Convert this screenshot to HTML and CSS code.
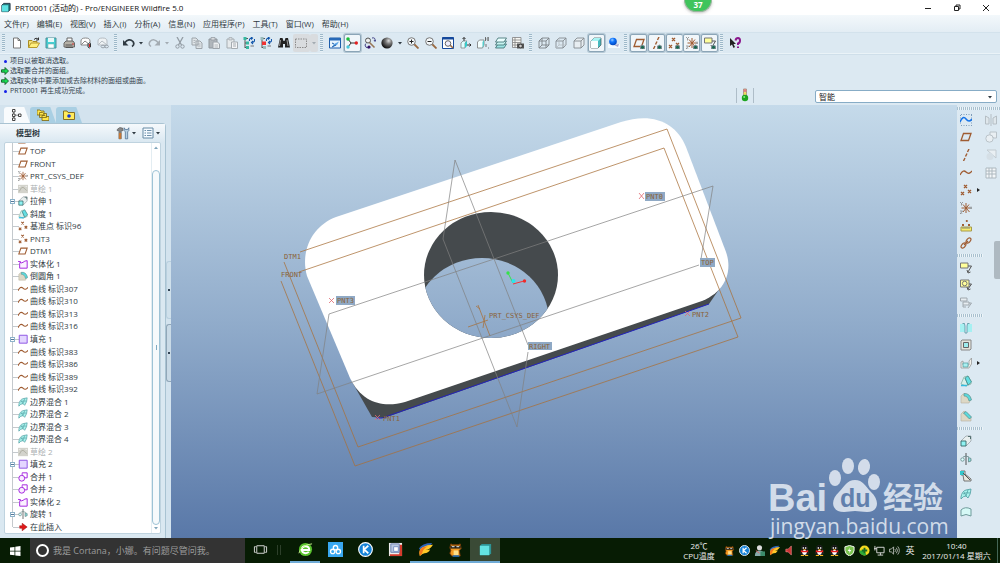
FILE: index.html
```html
<!DOCTYPE html>
<html lang="zh-CN">
<head>
<meta charset="utf-8">
<title>PRT0001 (活动的) - Pro/ENGINEER Wildfire 5.0</title>
<link rel="stylesheet" href="styles.css">
</head>
<body>
<svg class="defs" aria-hidden="true">
  <defs>
    <radialGradient id="ball" cx=".65" cy=".3" r=".7"><stop offset="0" stop-color="#ddd"/><stop offset=".4" stop-color="#777"/><stop offset="1" stop-color="#111"/></radialGradient>
    <radialGradient id="blueball" cx=".4" cy=".3" r=".7"><stop offset="0" stop-color="#9cf"/><stop offset=".4" stop-color="#17f"/><stop offset="1" stop-color="#04b"/></radialGradient>
  </defs>
  <symbol id="cube" viewBox="0 0 12 12"><path d="M2 3.5 4 1.500H11V8.500L9 10.500H2Z" fill="#24797c" stroke="#234" /><path d="M2 3.500H9V10.500H2Z" fill="#5fe3e3"/></symbol>
  <symbol id="new" viewBox="0 0 12 12"><path d="M2.500 1H7L9.500 3.500V11H2.500Z" fill="#fff" stroke="#777"/><path d="M7 1V3.500H9.500" fill="none" stroke="#777"/></symbol>
  <symbol id="open" viewBox="0 0 12 12"><path d="M.5 10.500V3.500H4L5 4.500H9V6" fill="#f3e27a" stroke="#a98b22"/><path d="M.5 10.500 3 6H11.500L9 10.500Z" fill="#ffef7d" stroke="#b79a2c"/><path d="M6 2.500Q8 0 10 2M10.500 .5V3H8" fill="none" stroke="#333"/></symbol>
  <symbol id="save" viewBox="0 0 12 12"><path d="M1 1H11V11H1Z" fill="#46cfd2" stroke="#4c8f98"/><path d="M3 1H9V5H3Z" fill="#e8f8f8"/><path d="M3 7H9V11H3Z" fill="#fff" stroke="#6aa" stroke-width=".5"/></symbol>
  <symbol id="print" viewBox="0 0 12 12"><path d="M4 5V1H9V5" fill="#fff" stroke="#666"/><path d="M1 6 3 4H10L11.500 6V10H1Z" fill="#b5b0a6" stroke="#666"/><path d="M2.500 8H9.500M2.500 10.500H10" stroke="#555"/><circle cx="10" cy="7" r=".8" fill="#d22"/></symbol>
  <symbol id="mail" viewBox="0 0 12 12"><path d="M1 8V4Q1 1 5.500 1T10 4V8Z" fill="#fff" stroke="#888"/><path d="M1 8 5 4 10 8" fill="none" stroke="#888"/><path d="M8 6.500V10Q9.500 12 10.500 10V6.500Q9.500 5 8.500 6.500" fill="none" stroke="#333"/><path d="M9.500 7V10" stroke="#d22"/></symbol>
  <symbol id="maillink" viewBox="0 0 12 12"><path d="M1 8V4Q1 1 5.500 1T10 4V8Z" fill="#eef2f4" stroke="#b5bcc2"/><path d="M1 8 5 4 10 8" fill="none" stroke="#b5bcc2"/><ellipse cx="6" cy="9.500" rx="2" ry="1.300" fill="none" stroke="#9aa3ab"/><ellipse cx="9.500" cy="9.500" rx="2" ry="1.300" fill="none" stroke="#9aa3ab"/></symbol>
  <symbol id="undo" viewBox="0 0 12 12"><path d="M1.500 6Q6 .5 10 4.500Q12 7.500 9 9.500" fill="none" stroke="currentColor" stroke-width="1.700"/><path d="M0 3V8.500H5.500Z" fill="currentColor"/></symbol>
  <symbol id="redo" viewBox="0 0 12 12"><path d="M10.500 6Q6 .5 2 4.500Q0 7.500 3 9.500" fill="none" stroke="currentColor" stroke-width="1.500"/><path d="M12 3V8.500H6.500Z" fill="currentColor"/></symbol>
  <symbol id="dd" viewBox="0 0 6 6"><path d="M1 2H5L3 4.500Z" fill="currentColor"/></symbol>
  <symbol id="cut" viewBox="0 0 12 12"><path d="M3 0 7.500 8M9 0 4.500 8" stroke="#939ca4" stroke-width="1.300"/><circle cx="3.500" cy="9.500" r="1.700" fill="none" stroke="#939ca4"/><circle cx="8.500" cy="9.500" r="1.700" fill="none" stroke="#939ca4"/></symbol>
  <symbol id="copy" viewBox="0 0 12 12"><path d="M1 1H5L7 3V8H1ZM5 4H9L11 6V11.500H5Z" fill="#dfe5e8" stroke="#9da4aa"/><path d="M6.500 7H9.500M6.500 9H9.500M2.500 3.500H4.500M2.500 5.500H4" stroke="#9da4aa" stroke-width=".7"/></symbol>
  <symbol id="paste" viewBox="0 0 12 12"><path d="M1 2H9V11H1Z" fill="#b0b6bb" stroke="#8f979d"/><path d="M3 .5H7V3H3Z" fill="#d7dbdd" stroke="#8f979d" stroke-width=".7"/><path d="M5 5H9.500L11.500 7V11.500H5Z" fill="#eceff0" stroke="#9da4aa"/><path d="M6.500 8H10M6.500 10H10" stroke="#9da4aa" stroke-width=".7"/></symbol>
  <symbol id="pastes" viewBox="0 0 12 12"><path d="M1 2H8V11H1Z" fill="#e6eaec" stroke="#a5acb1"/><path d="M3 .5H6V3H3Z" fill="#d7dbdd" stroke="#a5acb1" stroke-width=".7"/><path d="M5.500 5H11.500V11.500H5.500Z" fill="#f4f5f6" stroke="#a5acb1"/><path d="M7 7H10M7 9H10" stroke="#a5acb1"/></symbol>
  <symbol id="regen" viewBox="0 0 12 12"><path d="M2 1V11M2 1.500H5M2 6H5M2 10.500H5" stroke="#555"/><path d="M.5 0H3.500V3H.5ZM3 4.500H6V7.500H3ZM3 9H6V12H3Z" fill="#36b7a0"/><path d="M6.500 4Q6 1 9 1M8 0 9.500 1 8 2.500M11.500 2V4Q11 5.500 9 5.500M10 4 8.500 5.500 10 7" fill="none" stroke="#15a" stroke-width="1.100"/><path d="M7.500 9H11" stroke="#777"/></symbol>
  <symbol id="regenr" viewBox="0 0 12 12"><path d="M2 1V11M2 1.500H5M2 6H5M2 10.500H5" stroke="#555"/><path d="M.5 0H3.500V3H.5ZM3 9H6V12H3Z" fill="#9bb"/><path d="M2 4.500H6V8H2Z" fill="#e33"/><path d="M6.500 4Q6 1 9 1M8 0 9.500 1 8 2.500M11.500 2V4Q11 5.500 9 5.500M10 4 8.500 5.500 10 7" fill="none" stroke="#15a" stroke-width="1.100"/><path d="M7.500 9H11" stroke="#777"/></symbol>
  <symbol id="find" viewBox="0 0 12 12"><path d="M2 1H4.500L5.500 4H6.500L7.500 1H10L12 10.500H7V7H5V10.500H0Z" fill="#222"/><path d="M2.500 3 1.500 9M9 3 10 9" stroke="#bbb" stroke-width=".8"/></symbol>
  <symbol id="selbox" viewBox="0 0 12 12"><path d="M.5 2H11.500V10.500H.5Z" fill="none" stroke="#8b8b8b" stroke-dasharray="1.500 1"/></symbol>
  <symbol id="repaint" viewBox="0 0 12 12"><path d="M.5 1H11.500V11H.5Z" fill="#e8f4fd" stroke="#1d5dab"/><path d="M.5 1H11.500V3.500H.5Z" fill="#2769b8"/><path d="M3 10 5 7 10 4.500 8 8Z" fill="#5ca5e6"/><path d="M3 6 5 7M3 10 7 8" stroke="#1d5dab"/></symbol>
  <symbol id="spin" viewBox="0 0 12 12"><path d="M2 2 5 6H11M5 6 2 10" fill="none" stroke="#333"/><circle cx="2" cy="2" r="1.800" fill="#19bf3a"/><circle cx="10.300" cy="6" r="1.700" fill="#e32020"/><circle cx="2" cy="10" r="1.700" fill="#46c9dc"/></symbol>
  <symbol id="orient" viewBox="0 0 12 12"><circle cx="4" cy="3.500" r="2.500" fill="#eee" stroke="#555"/><path d="M5.500 5.500 10.500 10.500" stroke="#975" stroke-width="1.600"/><path d="M8 1Q11.500 0 11 4M10 3 11 4.500 12 3M1 8Q1 11 5 11M2 6.500 1 8" fill="none" stroke="#448"/><circle cx="5" cy="10" r="1.600" fill="#316"/></symbol>
  <symbol id="sphere" viewBox="0 0 12 12"><circle cx="6" cy="6" r="5.600" fill="url(#ball)"/></symbol>
  <symbol id="zin" viewBox="0 0 12 12"><path d="M7 7 11.500 11.500" stroke="#9a6a42" stroke-width="1.800"/><circle cx="4.500" cy="4.500" r="3.800" fill="#f4f8fa" stroke="#777"/><path d="M2.500 4.500H6.500M4.500 2.500V6.500" stroke="#222"/></symbol>
  <symbol id="zout" viewBox="0 0 12 12"><path d="M7 7 11.500 11.500" stroke="#9a6a42" stroke-width="1.800"/><circle cx="4.500" cy="4.500" r="3.800" fill="#f4f8fa" stroke="#777"/><path d="M2.500 4.500H6.500" stroke="#222"/></symbol>
  <symbol id="refit" viewBox="0 0 12 12"><path d="M.5 .5H11.500V11.500H.5Z" fill="#fff" stroke="#15499c"/><path d="M.5 1.500H11.500" stroke="#15499c" stroke-width="2"/><path d="M8 8 11 11" stroke="#9a6a42" stroke-width="1.600"/><circle cx="6" cy="6.500" r="2.800" fill="#eef" stroke="#666"/></symbol>
  <symbol id="reor" viewBox="0 0 12 12"><path d="M4 .5V4M2.500 2 4 .5 5.500 2M6 8H11M9.500 6.500 11 8 9.500 9.500" fill="none" stroke="#333"/><path d="M1 6 3 4H7L5 6V11H1Z" fill="#dff" stroke="#777" stroke-width=".7"/><path d="M5 6 7 4V9L5 11Z" fill="#3cc"/></symbol>
  <symbol id="views" viewBox="0 0 12 12"><path d="M.5 5 2.500 3H7V8L5.500 11H.5Z" fill="#f4ffff" stroke="#777" stroke-width=".8"/><path d="M5.500 5 7 3V8L5.500 11Z" fill="#5cc"/><path d="M8.500 0V4M11 0V4M8 2H9.500M10.500 1H12M10.500 3H12M9 7V10M11 11H12" stroke="#555" stroke-width=".8"/></symbol>
  <symbol id="layers" viewBox="0 0 12 12"><path d="M3 7H11.500L9 11H.5Z" fill="#9ee5e5" stroke="#396a6c" stroke-width=".8"/><path d="M3 4H11.500L9 8H.5Z" fill="#c7f4f1" stroke="#396a6c" stroke-width=".8"/><path d="M3 1H11.500L9 5H.5Z" fill="#eaffff" stroke="#396a6c" stroke-width=".8"/></symbol>
  <symbol id="vm" viewBox="0 0 12 12"><path d="M.5 .5H9V10.500H.5ZM3 .5V10.500M.5 3H9M.5 5.500H9M.5 8H6" fill="#f8f8f4" stroke="#808080" stroke-width=".8"/><path d="M5 6.500H12V11.500H5Z" fill="#555"/><circle cx="8.500" cy="9" r="1.800" fill="#ccc" stroke="#222" stroke-width=".7"/></symbol>
  <symbol id="wire" viewBox="0 0 12 12"><path d="M1 4H8V11H1ZM4 1H11V8H4ZM1 4 4 1M8 4 11 1M8 11 11 8M1 11 4 8" fill="none" stroke="#7c8186" stroke-width=".9"/></symbol>
  <symbol id="hid" viewBox="0 0 12 12"><path d="M1 4H8V11H1ZM4 1H11V8L8 11M1 4 4 1M8 4 11 1" fill="none" stroke="#858b90" stroke-width=".9"/><path d="M4 1V8H11M4 8 1 11" fill="none" stroke="#b5bbc0" stroke-width=".8"/></symbol>
  <symbol id="nohid" viewBox="0 0 12 12"><path d="M1 4H8V11H1ZM1 4 4 1H11V8L8 11M8 4 11 1" fill="#e7edf1" stroke="#858b90" stroke-width=".9"/></symbol>
  <symbol id="shade" viewBox="0 0 12 12"><path d="M1 4 4 1H11V8L8 11H1Z" fill="#45babf" stroke="#455" stroke-width=".7"/><path d="M1 4H8V11H1Z" fill="#f8ffff"/><path d="M1 4 4 1H11L8 4Z" fill="#a9f3f3"/></symbol>
  <symbol id="real" viewBox="0 0 12 12"><path d="M0 7H12V11H0Z" fill="#f4faff"/><path d="M6 8 11 7 10 10Z" fill="#aac"/><circle cx="5" cy="4.500" r="3.800" fill="url(#blueball)"/></symbol>
  <symbol id="eye" viewBox="0 0 12 12"><path d="M7 9 9.500 7.500 12 9V12H7Z" fill="#7d8f96"/><circle cx="9.500" cy="10.200" r="1.500" fill="#17674d"/></symbol>
  <symbol id="plane" viewBox="0 0 12 12"><path d="M3.500 2.500H11L8.500 9.500H1Z" fill="none" stroke="#9f5c32" stroke-width="1.300"/></symbol>
  <symbol id="axis" viewBox="0 0 12 12"><path d="M9 0 7.500 3M7 4.500 5.500 7.500M5 9 3.500 12" stroke="#9f5c32" stroke-width="1.400"/></symbol>
  <symbol id="pts" viewBox="0 0 12 12"><path d="M4 1 7 4M7 1 4 4M1 8 4 11M4 8 1 11M8 6 11 9M11 6 8 9" stroke="#9f5c32" stroke-width="1.300"/></symbol>
  <symbol id="csys" viewBox="0 0 12 12"><path d="M6 1V11M1.500 6H10M3 2.500 9.500 10M9 2.500 3 10" stroke="#9f5c32"/><path d="M0 0 1.500 1.500 3 0M1.500 1.500V3.500M0 9H2.500L0 12H2.500M10 4.500 12 7M12 4.500 10 7" fill="none" stroke="#777" stroke-width=".7"/></symbol>
  <symbol id="note" viewBox="0 0 12 12"><path d="M.5 1H8V6H.5Z" fill="#ffff9b" stroke="#777"/><path d="M8 4H11.500L8 10M7 8 8 11 10.500 10" fill="none" stroke="#555"/></symbol>
  <symbol id="help" viewBox="0 0 12 12"><path d="M1 1V9L3 7.500 4.500 11 6 10 4.500 7H7Z" fill="#222"/><path d="M6.500 3.500Q7 1 9 1T11 3.500T9 6.500V8M9 9.500V11" fill="none" stroke="#8a168c" stroke-width="2"/></symbol>
  <symbol id="sketch" viewBox="0 0 12 12"><path d="M0 1H12V11H0Z" fill="#d3d3cc"/><path d="M1.500 9Q4 3 6 4T10.500 8" fill="none" stroke="#a9a99c"/><path d="M1 3H3M9 3H11" stroke="#eee"/></symbol>
  <symbol id="extrude" viewBox="0 0 12 12"><path d="M1 6 6 1H11V6L6 11Z" fill="#e7eeee" stroke="#99a2a8" stroke-width=".8"/><path d="M1 6H6V11H1Z" fill="#8ff2f2" stroke="#366" stroke-width=".9"/><path d="M8 1.500H10.500V4" fill="none" stroke="#355" stroke-width=".8"/></symbol>
  <symbol id="draft" viewBox="0 0 12 12"><path d="M1 9 4 2 8 1 11 6V9L6 11Z" fill="#d8efe9" stroke="#7a9" stroke-width=".7"/><path d="M5 3 8 1 11.500 7 8 10Z" fill="#62dfe3" stroke="#488" stroke-width=".7"/><path d="M5 3 8 10" stroke="#488" stroke-width=".6"/><path d="M1 10.500H7" stroke="#3bd" stroke-width="1.500"/></symbol>
  <symbol id="solid" viewBox="0 0 12 12"><path d="M1 3Q4 6 6 4T11 2V11H2V5" fill="#fbf1ff" stroke="#a72ae0" stroke-width="1.200"/><path d="M0 3H3V5" fill="none" stroke="#a72ae0"/></symbol>
  <symbol id="round" viewBox="0 0 12 12"><path d="M1 4 3 2Q9 1 11 7L9 11H1Z" fill="#ddd8c5" stroke="#b6b09e" stroke-width=".6"/><path d="M4 1.500Q10 1 11.500 8L9 9Q8 4 4 4Z" fill="#5bdadd" stroke="#588" stroke-width=".6"/></symbol>
  <symbol id="curve" viewBox="0 0 12 12"><path d="M0 8Q3 2 6 5T12 4" fill="none" stroke="#9f5c32" stroke-width="1.300"/></symbol>
  <symbol id="fill" viewBox="0 0 12 12"><path d="M1.500 1.500H11V11H1.500Z" fill="#e3d6ff" stroke="#9058e4" stroke-width="1.200"/></symbol>
  <symbol id="blend" viewBox="0 0 12 12"><path d="M1 9Q2 3 6 2L11 1Q11 6 8 10L6 8Q3 8 1 11Z" fill="#a9f2ec" stroke="#4a9a9e" stroke-width=".8"/><path d="M4 4 6 8 8 2M3 6Q6 4 10 5" fill="none" stroke="#4a9a9e" stroke-width=".7"/></symbol>
  <symbol id="merge" viewBox="0 0 12 12"><path d="M5 1H11V7H8" fill="none" stroke="#a72ae0" stroke-width="1.200"/><circle cx="4.500" cy="7.500" r="3.500" fill="#f9eeff" stroke="#a72ae0" stroke-width="1.200"/><path d="M5 4V1" stroke="#a72ae0"/></symbol>
  <symbol id="revolve" viewBox="0 0 12 12"><path d="M6 0V12" stroke="#444" stroke-width=".9"/><circle cx="2.500" cy="6.500" r="1.700" fill="#dff" stroke="#688" stroke-width=".8"/><path d="M8.500 4.500 11 5.500V8L8.500 9Z" fill="#8dd" stroke="#688" stroke-width=".8"/><path d="M3 4Q6 2 9 4" fill="none" stroke="#688" stroke-width=".8"/></symbol>
  <symbol id="insert" viewBox="0 0 12 12"><path d="M2 4.500H5V1.500L11 6 5 10.500V7.500H2Z" fill="#e01818" stroke="#911" stroke-width=".6"/></symbol>
  <symbol id="sktool" viewBox="0 0 12 12"><path d="M1 .5H12M1 11.500H12M.5 1V11M11.500 1V11" stroke="#68a" stroke-width=".8" stroke-dasharray="1 1.500"/><path d="M0 8Q3 1 6 5T12 5" fill="none" stroke="#1674e8" stroke-width="1.500"/></symbol>
  <symbol id="ruler" viewBox="0 0 12 12"><path d="M1 7H11.500V11H1Z" fill="#f7ec6c" stroke="#a69b4c"/><path d="M3 7V9M5 7V9M7 7V9M9 7V9" stroke="#887"/><path d="M2 4 4 6M4 4 2 6M6 0 7.500 2M7.500 0 6 2M8 4 10 6M10 4 8 6" stroke="#9f5c32"/></symbol>
  <symbol id="chain" viewBox="0 0 12 12"><g fill="none" stroke="#9f5c32" stroke-width="1.200"><ellipse cx="3.500" cy="8.500" rx="3" ry="1.800" transform="rotate(-50 3.500 8.500)"/><ellipse cx="8.500" cy="3.500" rx="3" ry="1.800" transform="rotate(-50 8.500 3.500)"/><path d="M4 8 8 4"/></g></symbol>
  <symbol id="target" viewBox="0 0 12 12"><path d="M.5 1H9V8H.5Z" fill="#ffff9b" stroke="#777"/><circle cx="4.700" cy="4.500" r="2.300" fill="none" stroke="#777"/><path d="M9 5H11.500L8 10M7 8 8 11 10.500 10" fill="none" stroke="#555"/></symbol>
  <symbol id="notes" viewBox="0 0 12 12"><path d="M.5 1H7V4H.5ZM3 5H9V8H3Z" fill="#e7edf1" stroke="#a0a8ae"/><path d="M9 6H11.500L8 11M3 8V10H6" fill="none" stroke="#a0a8ae"/></symbol>
  <symbol id="hole" viewBox="0 0 12 12"><path d="M0 2H12V10H0Z" fill="#a6f0f2"/><path d="M2.500 1.500H4.500L5 4V11H7V4L7.500 1.500H9.500" fill="#eef" stroke="#5b9ba6" stroke-width=".9"/></symbol>
  <symbol id="shell" viewBox="0 0 12 12"><path d="M1 2 2 1H11V10L10 11H1Z" fill="#e4e4dc" stroke="#888"/><path d="M3.500 3.500H8.500V8.500H3.500Z" fill="#9eeced" stroke="#666"/></symbol>
  <symbol id="rib" viewBox="0 0 12 12"><path d="M1 5 3 4V8H9V4L11.500 1V7L9 11H1Z" fill="#f1f1eb" stroke="#999" stroke-width=".8"/><path d="M3 6H8V10H3Z" fill="#a9eff0" stroke="#4a9a9c" stroke-width=".7"/></symbol>
  <symbol id="chamfer" viewBox="0 0 12 12"><path d="M1 4 4 1 11 7V11H1Z" fill="#ddd8c5" stroke="#b6b09e" stroke-width=".6"/><path d="M3.500 3 6 1.500 11.500 7 9.500 9Z" fill="#5bdadd" stroke="#588" stroke-width=".7"/></symbol>
  <symbol id="sweep" viewBox="0 0 12 12"><path d="M1 1H5V4L11 9V11H4L3 5H1Z" fill="#e9e8df" stroke="#666" stroke-width=".9"/><path d="M0 1H4V5H0Z" fill="#33c8cd"/><path d="M3 3 10 10" stroke="#555"/></symbol>
  <symbol id="style" viewBox="0 0 12 12"><path d="M1 10V4Q5 0 11 3V10Q6 7 1 10Z" fill="#d6f9f6" stroke="#6f9b9b"/></symbol>
  <symbol id="mirror" viewBox="0 0 12 12"><path d="M6 0V12" stroke="#b5bec4"/><path d="M4 4 .5 2V10H4ZM8 4 11.500 2V10H8Z" fill="#dfe7ec" stroke="#b5bec4"/></symbol>
  <symbol id="gmerge" viewBox="0 0 12 12"><path d="M5 1H11.500V7H9L5 4Z" fill="#e9eff3" stroke="#bac3c9"/><circle cx="4.500" cy="7.500" r="3.700" fill="#e9eff3" stroke="#bac3c9"/></symbol>
  <symbol id="gtrim" viewBox="0 0 12 12"><path d="M2 1H11V9Z" fill="#e9eff3" stroke="#c2cbd1"/><circle cx="5" cy="7.500" r="3.500" fill="#d5dfe6"/></symbol>
  <symbol id="grid" viewBox="0 0 12 12"><path d="M1 1H11V11H1ZM1 4H11M1 7H11M4 1V11M7 1V11" fill="#f4f7f9" stroke="#adb8bf"/></symbol>
  <symbol id="tree" viewBox="0 0 12 12"><path d="M1.500 .5H4V3H1.500ZM1.500 5H4V7.500H1.500ZM7.500 5H10V7.500H7.500ZM1.500 9H4V11.500H1.500Z" fill="#fff" stroke="#333" stroke-width=".9"/><path d="M4 6.200H7.500M2.700 3V5M2.700 7.500V9" stroke="#333" stroke-width=".6"/></symbol>
  <symbol id="folders" viewBox="0 0 12 12"><path d="M0 1H3L4 2H7V6H0ZM2.500 3.500H5.500L6.500 4.500H9.500V8.500H2.500ZM5 6.500H8L9 7.500H12V11.500H5Z" fill="#ffe84d" stroke="#7a6614" stroke-width=".8"/></symbol>
  <symbol id="fav" viewBox="0 0 12 12"><path d="M.5 2H4L5 3.500H11.500V10.500H.5Z" fill="#ffec5c" stroke="#877122"/><circle cx="6" cy="7" r="1.800" fill="#1238d8"/></symbol>
  <symbol id="tools" viewBox="0 0 12 12"><path d="M1 3Q3 0 6 2V4H4.500V11H2.500V4H1Z" fill="#888" stroke="#555" stroke-width=".5"/><path d="M7 1.500V4L8 5V11H10V5L11 4V1.500L10 3H8Z" fill="#b5cfe2" stroke="#468" stroke-width=".6"/><path d="M2.500 6H4.500V11H2.500Z" fill="#c67735"/></symbol>
  <symbol id="list" viewBox="0 0 12 12"><path d="M1 1H11V11H1Z" fill="#f4faff" stroke="#678aa4"/><path d="M2.500 3.500H4M5 3.500H9.500M2.500 6H4M5 6H9.500M2.500 8.500H4M5 8.500H9.500" stroke="#4c7594" stroke-width=".8"/></symbol>
  <symbol id="garrow" viewBox="0 0 8 8"><path d="M.5 2.800H4V.5L7.500 4 4 7.500V5.200H.5Z" fill="#17df55" stroke="#145a27" stroke-width=".9"/></symbol>
  <symbol id="qq" viewBox="0 0 12 12"><path d="M3 6Q2 0 6 0T9 6L11 9 9 9.500V11H3V9.500L1 9Z" fill="#111" stroke="#444" stroke-width=".4"/><ellipse cx="6" cy="8" rx="2.500" ry="2.800" fill="#fff"/><path d="M2 5.500Q6 7.500 10 5.500V7.800H2Z" fill="#e22"/><path d="M4 2.500H5.500V4.200H4ZM6.500 2.500H8V4.200H6.500Z" fill="#fff"/><path d="M4 4.500H8L6 5.800ZM2 11H5.500V12H2ZM6.500 11H10V12H6.500Z" fill="#f8b31c"/></symbol>
  <symbol id="wing" viewBox="0 0 16 16"><path d="M1 7Q4 1 15 1Q14 4 9 5Q6 6 4 11Z" fill="#2c62b8"/><path d="M2 15Q0 8 5 5.500T16 3Q13 8 8 8.500Q12 8.500 13 8Q11 12 7 12Q5 12 2 15Z" fill="#ffc929"/><path d="M2 15Q0 8 5 5.500L11 4.500Q5 7 4.500 12Z" fill="#f5781c"/></symbol>
  <symbol id="owl" viewBox="0 0 16 16"><path d="M3 2 5 3H11L13 2 14 7 12 9 13 15H4L2 12 3 9 2 6Z" fill="#f39a20" stroke="#7a3b08"/><path d="M2.500 4H13.500V7H2.500Z" fill="#242018"/><path d="M4 5H7M9 5H12" stroke="#fff"/><path d="M6 9H11V14H6Z" fill="#ffdf8a"/><path d="M5 15H12" stroke="#1874ce" stroke-width="1.500"/></symbol>
  <symbol id="k" viewBox="0 0 16 16"><circle cx="8" cy="8" r="7.300" fill="#1583d8" stroke="#fff" stroke-width="1.200"/><path d="M6 4V12M11 4 6.500 8 11 12" fill="none" stroke="#fff" stroke-width="1.800"/></symbol>
</svg>

<div class="app">
  <header class="titlebar">
    <svg><use href="#cube"/></svg>
    <h1>PRT0001 (活动的) - Pro/ENGINEER Wildfire 5.0</h1>
    <div class="winbtns">
      <button aria-label="最小化"><svg viewBox="0 0 8 8"><path d="M1 4.500H7" stroke="#222"/></svg></button>
      <button aria-label="还原"><svg viewBox="0 0 8 8"><path d="M1.500 2.500H5.500V6.500H1.500ZM3 2.500V1H7V5H5.500" fill="none" stroke="#222"/></svg></button>
      <button aria-label="关闭"><svg viewBox="0 0 8 8"><path d="M1 1 7 7M7 1 1 7" stroke="#222"/></svg></button>
    </div>
    <span class="counter">37</span>
  </header>

  <nav class="menubar">
    <button>文件(F)</button><button>编辑(E)</button><button>视图(V)</button><button>插入(I)</button><button>分析(A)</button><button>信息(N)</button><button>应用程序(P)</button><button>工具(T)</button><button>窗口(W)</button><button>帮助(H)</button>
  </nav>

  <div class="toolbar">
    <i class="grip"></i>
    <div class="group g-file">
      <button aria-label="新建"><svg><use href="#new"/></svg></button><button aria-label="打开"><svg><use href="#open"/></svg></button><button aria-label="保存"><svg><use href="#save"/></svg></button><button aria-label="打印"><svg><use href="#print"/></svg></button><button aria-label="发送邮件"><svg><use href="#mail"/></svg></button><button aria-label="发送链接" disabled><svg><use href="#maillink"/></svg></button>
    </div>
    <i class="grip"></i>
    <div class="group g-edit">
      <button aria-label="撤销"><svg><use href="#undo"/></svg></button><button class="dd" aria-label="撤销列表"><svg><use href="#dd"/></svg></button>
      <button class="off" aria-label="重做"><svg><use href="#redo"/></svg></button><button class="dd off" aria-label="重做列表"><svg><use href="#dd"/></svg></button>
      <button aria-label="剪切"><svg><use href="#cut"/></svg></button><button aria-label="复制"><svg><use href="#copy"/></svg></button><button aria-label="粘贴"><svg><use href="#paste"/></svg></button><button aria-label="选择性粘贴"><svg><use href="#pastes"/></svg></button><button aria-label="再生"><svg><use href="#regen"/></svg></button><button aria-label="再生管理器"><svg><use href="#regenr"/></svg></button><button aria-label="查找"><svg><use href="#find"/></svg></button><button class="grey" aria-label="选取框"><svg><use href="#selbox"/></svg></button><button class="dd grey off" aria-label="选取列表"><svg><use href="#dd"/></svg></button>
    </div>
    <i class="grip"></i>
    <div class="group g-view">
      <button aria-label="重画"><svg><use href="#repaint"/></svg></button><button class="on" aria-label="旋转中心"><svg><use href="#spin"/></svg></button><button aria-label="定向模式"><svg><use href="#orient"/></svg></button><button aria-label="外观库"><svg><use href="#sphere"/></svg></button><button class="dd" aria-label="外观列表"><svg><use href="#dd"/></svg></button><button aria-label="放大"><svg><use href="#zin"/></svg></button><button aria-label="缩小"><svg><use href="#zout"/></svg></button><button aria-label="重新调整"><svg><use href="#refit"/></svg></button><button aria-label="重定向"><svg><use href="#reor"/></svg></button><button aria-label="视图列表"><svg><use href="#views"/></svg></button><button aria-label="层"><svg><use href="#layers"/></svg></button><button aria-label="视图管理器"><svg><use href="#vm"/></svg></button>
    </div>
    <i class="grip"></i>
    <div class="group g-disp">
      <button aria-label="线框"><svg><use href="#wire"/></svg></button><button aria-label="隐藏线"><svg><use href="#hid"/></svg></button><button aria-label="消隐"><svg><use href="#nohid"/></svg></button><button class="on" aria-label="着色"><svg><use href="#shade"/></svg></button><button aria-label="增强真实感"><svg><use href="#real"/></svg></button>
    </div>
    <i class="grip"></i>
    <div class="group g-datum">
      <button class="on" aria-label="平面显示"><svg><use href="#plane"/><use href="#eye"/></svg></button><button class="on" aria-label="轴显示"><svg><use href="#axis"/><use href="#eye"/></svg></button><button class="on" aria-label="点显示"><svg><use href="#pts"/><use href="#eye"/></svg></button><button class="on" aria-label="坐标系显示"><svg><use href="#csys"/><use href="#eye"/></svg></button><button class="on" aria-label="注释显示"><svg><use href="#note"/><use href="#eye"/></svg></button>
    </div>
    <i class="grip"></i>
    <div class="group"><button aria-label="帮助"><svg><use href="#help"/></svg></button></div>
  </div>

  <section class="messages">
    <ul>
      <li><i class="dot"></i>项目以被取消选取。</li>
      <li><svg><use href="#garrow"/></svg>选取要合并的面组。</li>
      <li><svg><use href="#garrow"/></svg>选取实体中要添加或去除材料的面组或曲面。</li>
      <li><i class="dot"></i>PRT0001 再生成功完成。</li>
    </ul>
    <div class="light"><svg viewBox="0 0 8 14"><path d="M2.500 1H5.500V8H2.500Z" fill="#e8d8a0" stroke="#a98"/><circle cx="4" cy="2.500" r="1.500" fill="#e08080"/><circle cx="4" cy="5.500" r="1.300" fill="#eddc55"/><circle cx="4" cy="10" r="3.200" fill="#1ba51f"/><circle cx="3.200" cy="9" r="1" fill="#8ee38a"/></svg></div>
    <label class="filter"><select aria-label="选取过滤器"><option>智能</option></select><svg><use href="#dd"/></svg></label>
  </section>

  <main class="work">
    <aside class="side">
      <div class="tabs">
        <button class="tab cur" aria-label="模型树"><svg><use href="#tree"/></svg></button><button class="tab" aria-label="文件夹浏览器"><svg><use href="#folders"/></svg></button><button class="tab" aria-label="收藏夹"><svg><use href="#fav"/></svg></button>
      </div>
      <div class="sidebody">
        <div class="panel">
          <div class="panelhead"><h2>模型树</h2>
            <button aria-label="设置"><svg class="i14"><use href="#tools"/></svg><svg class="i6"><use href="#dd"/></svg></button>
            <button aria-label="显示"><svg><use href="#list"/></svg><svg class="i6"><use href="#dd"/></svg></button>
          </div>
          <div class="treebox">
            <ul class="tree">
              <li class="clip"><svg><use href="#plane"/></svg></li>
              <li><svg><use href="#plane"/></svg>TOP</li>
              <li><svg><use href="#plane"/></svg>FRONT</li>
              <li><svg><use href="#csys"/></svg>PRT_CSYS_DEF</li>
              <li class="dim"><svg><use href="#sketch"/></svg>草绘 1</li>
              <li><button aria-label="展开"></button><svg><use href="#extrude"/></svg>拉伸 1</li>
              <li><svg><use href="#draft"/></svg>斜度 1</li>
              <li><svg><use href="#pts"/></svg>基准点 标识96</li>
              <li><svg><use href="#pts"/></svg>PNT3</li>
              <li><svg><use href="#plane"/></svg>DTM1</li>
              <li><svg><use href="#solid"/></svg>实体化 1</li>
              <li><svg><use href="#round"/></svg>倒圆角 1</li>
              <li><svg><use href="#curve"/></svg>曲线 标识307</li>
              <li><svg><use href="#curve"/></svg>曲线 标识310</li>
              <li><svg><use href="#curve"/></svg>曲线 标识313</li>
              <li><svg><use href="#curve"/></svg>曲线 标识316</li>
              <li><button aria-label="展开"></button><svg><use href="#fill"/></svg>填充 1</li>
              <li><svg><use href="#curve"/></svg>曲线 标识383</li>
              <li><svg><use href="#curve"/></svg>曲线 标识386</li>
              <li><svg><use href="#curve"/></svg>曲线 标识389</li>
              <li><svg><use href="#curve"/></svg>曲线 标识392</li>
              <li><svg><use href="#blend"/></svg>边界混合 1</li>
              <li><svg><use href="#blend"/></svg>边界混合 2</li>
              <li><svg><use href="#blend"/></svg>边界混合 3</li>
              <li><svg><use href="#blend"/></svg>边界混合 4</li>
              <li class="dim"><svg><use href="#sketch"/></svg>草绘 2</li>
              <li><button aria-label="展开"></button><svg><use href="#fill"/></svg>填充 2</li>
              <li><svg><use href="#merge"/></svg>合并 1</li>
              <li><svg><use href="#merge"/></svg>合并 2</li>
              <li><svg><use href="#solid"/></svg>实体化 2</li>
              <li><button aria-label="展开"></button><svg><use href="#revolve"/></svg>旋转 1</li>
              <li><svg><use href="#insert"/></svg>在此插入</li>
            </ul>
            <div class="scroll"><svg class="up"><use href="#dd"/></svg><i class="thumb"></i><svg><use href="#dd"/></svg></div>
          </div>
        </div>
        <div class="sash"><i class="pale"></i><i></i></div>
      </div>
    </aside>

    <div class="canvas">
      <svg viewBox="171 105 786 433" preserveAspectRatio="xMidYMid slice" role="img" aria-label="PRT0001">
        <defs>
          <linearGradient id="sky" gradientUnits="userSpaceOnUse" x1="0" y1="105" x2="0" y2="538"><stop offset="0" stop-color="#c5daea"/><stop offset=".5" stop-color="#91accb"/><stop offset="1" stop-color="#5978a8"/></linearGradient>
          <clipPath id="bore"><ellipse cx="491" cy="275" rx="67" ry="63"/></clipPath>
        </defs>
        <path d="M171 105H957V538H171Z" fill="url(#sky)"/>
        <path d="M351 380 372 417 384 418 709 304 720 288 690 290Z" fill="#454a4d"/>
        <path d="M376 418H382L709 304" fill="none" stroke="#2323bd"/>
        <path d="M336 217 621 122C652 112 676 122 686 147L726 252C733 272 725 293 699 302L405 402C383 408 362 403 350 378L307 276C300 251 312 226 336 217Z" fill="#fff"/>
        <g clip-path="url(#bore)"><path d="M420 205H562V342H420Z" fill="#454a4d"/><ellipse cx="482" cy="321" rx="67" ry="63" fill="url(#sky)"/></g>
        <g fill="none" stroke="#a8703a" stroke-opacity=".75">
          <path d="M300 252 667 129 741 318 358 447 284 262"/>
          <path d="M299 272 664 148 738 337 355 466 281 281"/>
          <path d="M468 327 488 320M478 305 490 336M485 315 483 328M476 306 480 309"/>
        </g>
        <g fill="none" stroke="#808080" stroke-opacity=".7">
          <path d="M701 259 713 186 329 314 317 394 699 265"/>
          <path d="M528 345 455 160 443 239 517 427 528 352"/>
        </g>
        <path d="M329 298 334 303M334 298 329 303M639 193 644 199M644 193 639 199M375 415 380 420M380 415 375 420M685 311 690 316M690 311 685 316" stroke="#e06a72" stroke-opacity=".8"/>
        <path d="M336 296H355V305H336ZM645 192H665V201H645ZM700 258H715V267H700ZM528 342H552V350H528Z" fill="#8fa9c5"/>
        <g class="tags">
          <text x="284" y="259">DTM1</text><text x="281" y="277">FRONT</text><text x="337" y="303">PNT3</text><text x="383" y="421">PNT1</text><text x="646" y="199">PNT0</text><text x="701" y="265">TOP</text><text x="692" y="317">PNT2</text><text x="529" y="349">RIGHT</text><text x="489" y="318">PRT_CSYS_DEF</text>
        </g>
        <path d="M508 273 513 283" stroke="#36e348"/><path d="M513 284 524 281" stroke="#f03636"/><circle cx="508" cy="273" r="1.700" fill="#36e348"/><circle cx="524.500" cy="281" r="1.700" fill="#f02a2a"/><circle cx="513.500" cy="281" r="2" fill="#29e6ee"/>
      </svg>
    </div>

    <aside class="feats">
      <i class="hgrip wide"></i>
      <div class="cols c8">
        <button aria-label="草绘"><svg><use href="#sktool"/></svg></button><button aria-label="镜像"><svg><use href="#mirror"/></svg></button>
        <button aria-label="基准平面"><svg><use href="#plane"/></svg></button><button aria-label="合并"><svg><use href="#gmerge"/></svg></button>
        <button aria-label="基准轴"><svg><use href="#axis"/></svg></button><button aria-label="修剪"><svg><use href="#gtrim"/></svg></button>
        <button aria-label="基准曲线"><svg><use href="#curve"/></svg></button><button aria-label="阵列"><svg><use href="#grid"/></svg></button>
        <button class="more" aria-label="基准点"><svg><use href="#pts"/></svg></button>
        <button aria-label="坐标系"><svg><use href="#csys"/></svg></button>
        <button aria-label="分析"><svg><use href="#ruler"/></svg></button>
        <button aria-label="参照"><svg><use href="#chain"/></svg></button>
      </div>
      <i class="hgrip"></i>
      <div class="cols c3"><button aria-label="注释"><svg><use href="#note"/></svg></button><button aria-label="注释目标"><svg><use href="#target"/></svg></button><button aria-label="注释组"><svg><use href="#notes"/></svg></button></div>
      <i class="hgrip"></i>
      <div class="cols c6"><button aria-label="孔"><svg><use href="#hole"/></svg></button><button aria-label="壳"><svg><use href="#shell"/></svg></button><button class="more" aria-label="筋"><svg><use href="#rib"/></svg></button><button aria-label="拔模"><svg><use href="#draft"/></svg></button><button aria-label="倒圆角"><svg><use href="#round"/></svg></button><button aria-label="倒角"><svg><use href="#chamfer"/></svg></button></div>
      <i class="hgrip"></i>
      <div class="cols c5"><button aria-label="拉伸"><svg><use href="#extrude"/></svg></button><button aria-label="旋转"><svg><use href="#revolve"/></svg></button><button aria-label="扫描"><svg><use href="#sweep"/></svg></button><button aria-label="边界混合"><svg><use href="#blend"/></svg></button><button aria-label="造型"><svg><use href="#style"/></svg></button></div>
      <i class="edge"></i>
    </aside>

    <svg class="mark" viewBox="0 0 184 86" role="img" aria-label="Baidu 经验">
      <g fill="#dce4ef">
        <text class="bai" x="0" y="56">Bai</text>
        <ellipse cx="67" cy="23" rx="6" ry="8"/><ellipse cx="80" cy="11" rx="6" ry="8"/><ellipse cx="96" cy="12" rx="6" ry="8" transform="rotate(10 96 12)"/><ellipse cx="106" cy="27" rx="6" ry="8"/>
        <path d="M87 25C95 25 97 31 103 37C112 45 111 57 99 57C94 57 91 56 87 56C83 56 80 57 76 57C63 57 62 45 71 37C77 31 79 25 87 25Z"/>
        <text class="jy" x="115" y="53">经验</text>
        <text class="url" x="2" y="79">jingyan.baidu.com</text>
      </g>
      <text class="du" x="72" y="52">du</text>
    </svg>
  </main>

  <footer class="taskbar">
    <button class="start" aria-label="开始"><svg viewBox="0 0 12 12"><path d="M1 2.500 5.500 2V5.700H1ZM6.300 1.800 11.500 1V5.700H6.300ZM1 6.500H5.500V10.200L1 9.700ZM6.300 6.500H11.500V11L6.300 10.400Z" fill="#fff"/></svg></button>
    <label class="cortana"><i></i><input type="text" aria-label="搜索" placeholder="我是 Cortana，小娜。有问题尽管问我。"></label>
    <div class="apps">
      <button aria-label="任务视图"><svg viewBox="0 0 16 16"><path d="M4 4H12V12H4ZM3 5H1.500V11H3M13 5H14.500V11H13" fill="none" stroke="#ddd"/></svg></button>
      <i class="bar"></i>
      <button class="run" aria-label="浏览器"><svg viewBox="0 0 16 16"><circle cx="8" cy="8" r="7" fill="#58c32c"/><path d="M4 8.500H12Q12 4.500 8 4.500T4 8.500Q4.500 12 8 12Q10.500 12 11.500 10.500" fill="none" stroke="#fff" stroke-width="2"/><path d="M1 12Q3 3 15 2" fill="none" stroke="#c5f18d"/></svg></button>
      <button aria-label="网盘"><svg viewBox="0 0 16 16"><path d="M0 0H16V16H0Z" fill="#39a8f0"/><g fill="none" stroke="#fff" stroke-width="1.400"><circle cx="8" cy="6" r="2.300"/><circle cx="5" cy="10" r="2.300"/><circle cx="11" cy="10" r="2.300"/></g></svg></button>
      <button aria-label="酷狗"><svg><use href="#k"/></svg></button>
      <button aria-label="看图"><svg viewBox="0 0 16 16"><path d="M1 1H15V15H1Z" fill="#eee"/><path d="M2 13H12V3H15V15H2Z" fill="#d33b2c"/><path d="M3 2H12V11H3Z" fill="#b8c8e0" stroke="#6c83b0"/><path d="M6 5H11V10H6Z" fill="#fff" stroke="#7a93c4"/></svg></button>
      <button class="run" aria-label="迅雷"><svg><use href="#wing"/></svg></button>
      <button class="run" aria-label="猫头鹰"><svg><use href="#owl"/></svg></button>
      <button class="run act" aria-label="Pro/ENGINEER"><svg viewBox="0 0 16 16"><path d="M2 4 4 2H14V12L12 14H2Z" fill="#2e9294"/><path d="M2 4H12V14H2Z" fill="#63e2e2"/></svg></button>
    </div>
    <div class="temp"><span>26℃</span><span>CPU温度</span></div>
    <div class="tray">
      <svg><use href="#owl"/></svg><svg><use href="#k"/></svg>
      <svg viewBox="0 0 12 12"><circle cx="6" cy="3" r="2.800" fill="#ddd"/><path d="M1 12Q1 6 6 6T11 12Z" fill="#8aa"/><path d="M7 7H12V12H7Z" fill="#3b8b6a"/><path d="M2 6 6 9" stroke="#d66"/></svg>
      <svg><use href="#wing"/></svg>
      <svg viewBox="0 0 12 12"><path d="M2 4.500H4.500L8 1V11L4.500 7.500H2Z" fill="#c33" stroke="#f99" stroke-width=".6"/></svg>
      <svg><use href="#qq"/></svg><svg><use href="#qq"/></svg><svg><use href="#qq"/></svg>
      <svg viewBox="0 0 12 12"><path d="M6 .5 11 2V6Q11 10 6 12Q1 10 1 6V2Z" fill="#7cc650" stroke="#fff"/><path d="M6.500 3 4 6.500H6L5.500 9 8 5.500H6Z" fill="#fff"/></svg>
      <svg viewBox="0 0 12 12"><circle cx="6" cy="6" r="5.500" fill="#f5dc1f"/><path d="M0 6A6 6 0 0 0 8 11L6 6Z" fill="#2daa3a"/><path d="M6 3V9M3 6H9" stroke="#146b24" stroke-width="2"/></svg>
      <svg viewBox="0 0 12 12"><path d="M3 2.500H11V8.500H3ZM7 8.500V11M4 11H10M1 1V6M0 4H3" fill="none" stroke="#ddd"/></svg>
      <svg viewBox="0 0 12 12"><path d="M.5 4.500H2.500L5 2V10L2.500 7.500H.5ZM6.500 4.500Q8 6 6.500 7.500M8 3Q10.500 6 8 9M9.500 1.500Q13 6 9.500 10.500" fill="none" stroke="#ddd" stroke-width=".8"/></svg>
      <span>英</span>
    </div>
    <div class="clock"><span>10:40</span><span>2017/01/14 星期六</span></div>
  </footer>
</div>
</body>
</html>
```
FILE: styles.css
```css
* { box-sizing: border-box; }
body { margin: 0; font: 8px/10px "Open Sans", "Noto Sans CJK SC", sans-serif; color: #2f3a42; }
button { font: inherit; color: inherit; border: 0; padding: 0; margin: 0; background: none; display: flex; align-items: center; justify-content: center; }
ul { list-style: none; margin: 0; padding: 0; }
h1, h2 { margin: 0; font-size: 8px; font-weight: normal; }
svg { display: block; flex: none; width: 12px; height: 12px; }
.defs { position: absolute; width: 0; height: 0; }
.i14 { width: 14px; height: 14px; }
.i6 { width: 6px; height: 6px; }
.app { height: 100vh; display: flex; flex-direction: column; overflow: hidden; background: #dce9f2; }

.titlebar { position: relative; height: 15px; background: #fff; display: flex; align-items: center; gap: 4px; flex: none; }
.titlebar > svg { width: 11px; height: 11px; }
.titlebar h1 { line-height: 14px; color: #111; }
.winbtns { margin-left: auto; display: flex; }
.winbtns button { width: 29px; height: 14px; }
.winbtns svg { width: 8px; height: 8px; }
.counter { position: absolute; left: 70%; top: 0; width: 28px; height: 12px; margin-left: -16px; border-radius: 0 0 14px 14px; background: #3fc45c; border: 1px solid #98b59d; border-top: 0; box-shadow: 0 1px 3px #8888; color: #fff; font-weight: bold; line-height: 9px; text-align: center; z-index: 2; }

.menubar { height: 17px; flex: none; display: flex; gap: 8px; padding-left: 4px; background: linear-gradient(#f3f8fb, #e3edf4); }

.toolbar { height: 22px; flex: none; display: flex; align-items: center; padding-left: 2px; border-top: 1px solid #d3e2ec; border-bottom: 1px solid #eaf3f8; }
.grip { width: 3px; height: 18px; flex: none; background: repeating-linear-gradient(#9db8c9 0 1px, #e8f1f6 1px 2px); }
.group { display: flex; justify-content: space-between; margin: 0 2px 0 3px; }
.group button { width: 17px; height: 18px; border-radius: 2px; }
.group .dd { width: 8px; }
.group .dd svg { width: 6px; height: 6px; }
.group .on { border: 1px solid #8ba5b7; background: #f0f6fa; box-shadow: 0 0 0 1px #b5c8d5; }
.off { color: #a3abb2; }
.group .grey { background: #d9dcdf; }
.g-file { width: 104px; }
.g-edit { width: 198px; }
.g-view { width: 201px; }
.g-disp { width: 87px; }
.g-datum { width: 88px; }

.messages { height: 51px; flex: none; display: flex; align-items: flex-end; border-top: 1px solid #cfdfea; padding: 0 3px 2px 0; }
.messages ul { flex: 1; align-self: flex-start; padding-top: 1px; font-size: 7px; color: #34424c; }
.messages li { display: flex; align-items: center; gap: 1px; height: 10px; padding-left: 1px; }
.messages li svg { width: 8px; height: 8px; }
.dot { width: 3px; height: 3px; margin: 0 2px 0 3px; border-radius: 50%; background: #1520e8; }
.light { width: 18px; height: 15px; border: solid #aebdc8; border-width: 0 1px; margin-right: 61px; display: flex; justify-content: center; }
.light svg { width: 8px; height: 14px; }
.filter { position: relative; width: 182px; height: 13px; }
.filter select { appearance: none; display: block; width: 100%; height: 100%; border: 1px solid #87acc6; border-radius: 2px; background: #fff; padding: 0 3px; font: inherit; line-height: 10px; color: #222; }
.filter svg { position: absolute; right: 4px; top: 4px; width: 6px; height: 6px; }

.work { position: relative; flex: 1; min-height: 0; display: flex; }
.side { width: 171px; flex: none; display: flex; flex-direction: column; background: #d3e3ee; }
.tabs { display: flex; height: 18px; padding: 2px 0 0 4px; }
.tab { width: 26px; background: #a9cfe3; clip-path: polygon(0 0, 78% 0, 100% 100%, 0 100%); border-radius: 3px 0 0 0; }
.tab.cur { background: #f8fbfd; }
.sidebody { flex: 1; min-height: 0; display: flex; }
.panel { width: 166px; display: flex; flex-direction: column; border: solid #a9c3d2; border-width: 1px 1px 0 0; border-radius: 0 4px 0 0; background: #dae8f1; padding: 0 4px 4px; }
.panelhead { height: 18px; flex: none; display: flex; align-items: center; gap: 5px; padding: 0 4px 0 16px; background: linear-gradient(#f5f9fc, #dae8f1); margin: 0 -4px; }
.panelhead h2 { flex: 1; font-weight: bold; }
.panelhead button { gap: 1px; }
.treebox { flex: 1; min-height: 0; display: flex; background: #fff; border: 1px solid #bfd3df; border-radius: 2px; }
.tree { flex: 1; display: grid; grid-template-rows: 2px; grid-auto-rows: 1fr; background: linear-gradient(#c4c9cd, #c4c9cd) 7px 0 / 1px calc(100% - 6px) no-repeat; }
.tree li { position: relative; display: flex; align-items: center; gap: 2px; padding-left: 13px; min-height: 0; white-space: nowrap; }
.tree li::before { content: ""; position: absolute; left: 8px; top: 50%; width: 6px; height: 1px; background: #c4c9cd; }
.tree li svg { width: 10px; height: 10px; position: relative; }
.tree .clip { overflow: hidden; align-items: flex-end; }
.tree .clip::before { display: none; }
.tree .dim { color: #aaaeb1; }
.tree button { position: absolute; z-index: 1; left: 5px; top: 4px; width: 5px; height: 5px; border: 1px solid #8eb3ca; background: linear-gradient(#579, #579) center / 3px 1px no-repeat #fff; }
.scroll { width: 9px; display: flex; flex-direction: column; align-items: center; color: #7fa4ba; border-left: 1px solid #e3edf2; padding: 2px 0; }
.scroll svg { width: 6px; height: 6px; }
.scroll .up { transform: rotate(180deg); }
.thumb { flex: 1; width: 8px; margin-top: 19px; border: 1px solid #9dc3d6; border-radius: 4px; background: linear-gradient(#7fabc4, #7fabc4) center / 1px 5px no-repeat #f6fafc; }
.sash { flex: 1; display: flex; flex-direction: column; gap: 5px; padding-top: 138px; }
.sash i { height: 58px; border: 1px solid #91a7b8; border-right: 0; border-radius: 3px 0 0 3px; background: linear-gradient(#345, #345) center / 2px 2px no-repeat #c9dae6; }
.sash .pale { border-color: #b8cfde; background-color: #cfe0eb; }

.canvas { flex: 1; min-width: 0; background: #91accb; }
.canvas svg { width: 100%; height: 100%; }
.tags { font: 7px "DejaVu Sans Mono", monospace; fill: #8a6238; }

.feats { position: relative; width: 43px; flex: none; display: flex; flex-direction: column; padding-top: 1px; }
.hgrip { width: 26px; height: 3px; margin: 2px 0; flex: none; background: repeating-linear-gradient(90deg, #a8c0cf 0 1px, #edf4f8 1px 2px); }
.hgrip.wide { width: 100%; margin: 1px 0; }
.cols { display: grid; grid-template-columns: 18px 25px; grid-auto-rows: 1fr; flex: none; }
.cols button:nth-child(n) { grid-column: 1; position: relative; }
.c8 button:nth-child(2), .c8 button:nth-child(4), .c8 button:nth-child(6), .c8 button:nth-child(8) { grid-column: 2; padding-left: 7px; }
.c8 { height: 141px; }
.c3 { height: 53px; }
.c6 { height: 106px; }
.c5 { height: 89px; }
.more::after { content: ""; position: absolute; left: 20px; border: solid transparent; border-width: 2px 0 2px 3px; border-left-color: #222; }
.edge { position: absolute; right: 0; top: 136px; width: 6px; height: 38px; border-radius: 2px 0 0 2px; background: #aeb9c1; }

.mark { position: absolute; z-index: 3; right: 48px; bottom: -3px; width: 184px; height: 86px; opacity: .92; }
.bai { font: bold 38px "Liberation Sans", sans-serif; }
.jy { font: bold 30px "Noto Sans CJK SC", sans-serif; }
.url { font: 21px "Open Sans", sans-serif; }
.du { font: bold 25px "Liberation Sans", sans-serif; fill: #6180ad; }

.taskbar { height: 25px; flex: none; display: flex; align-items: stretch; background: #071c04; color: #eee; }
.start { width: 30px; }
.cortana { width: 215px; display: flex; align-items: center; gap: 4px; padding-left: 6px; background: #333; }
.cortana i { width: 13px; height: 13px; border: 2px solid #fff; border-radius: 50%; flex: none; }
.cortana input { flex: 1; min-width: 0; border: 0; padding: 0; background: none; font: inherit; font-size: 9px; color: #fff; }
.cortana input::placeholder { color: #9c9c9c; opacity: 1; }
.apps { display: flex; align-items: stretch; }
.apps button { width: 30px; padding: 0 0 1px; border-bottom: 2px solid transparent; }
.apps svg { width: 15px; height: 15px; }
.apps .run { border-color: #6fabd6; }
.apps .act { background: #3a4a36; }
.bar { width: 4px; height: 10px; margin: 7px 9px 0 2px; border: solid #2d3f2a; border-width: 0 1px; }
.temp { margin-left: auto; width: 44px; display: flex; flex-direction: column; align-items: center; justify-content: center; }
.tray { display: flex; align-items: center; gap: 4px; padding-left: 3px; }
.tray svg { width: 11px; height: 11px; }
.tray span { width: 12px; font-size: 9px; text-align: center; }
.clock { width: 82px; display: flex; flex-direction: column; align-items: center; justify-content: center; border-right: 1px solid #465; margin-right: 2px; }
```
